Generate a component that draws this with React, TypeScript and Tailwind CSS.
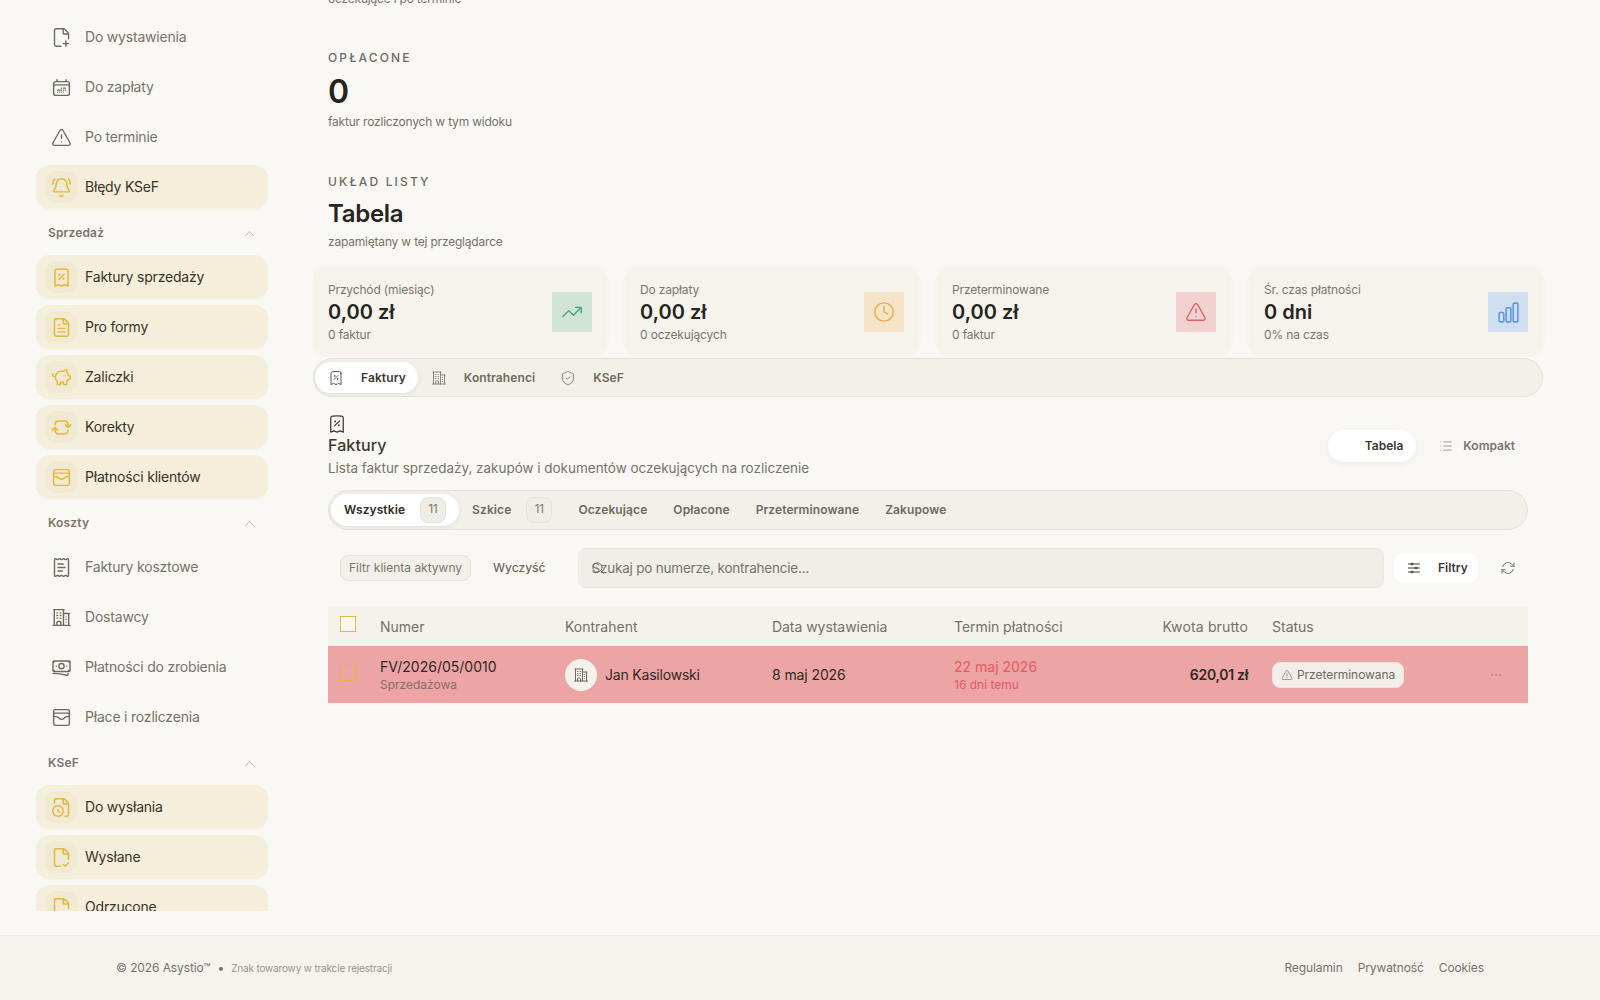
import React from "react";
import { FilePlusCorner, TriangleAlert, BellRing, FileText, PiggyBank, WalletCards, ReceiptText, FileClock, FileCheckCorner, FileXCorner, ChevronUp, TrendingUp, Clock, ShieldCheck, Search, Ellipsis, List } from "lucide-react";
import { HiOutlineCalendarDateRange, HiOutlineReceiptPercent, HiOutlineBuildingOffice2, HiOutlineBanknotes, HiOutlineChartBar, HiOutlineAdjustmentsHorizontal, HiOutlineArrowPath, HiOutlineArrowPathRoundedSquare } from "react-icons/hi2";

type Ic = React.ComponentType<{ size?: number; className?: string; strokeWidth?: number }>;

function Plain({ icon: I, label }: { icon: Ic; label: string }) {
  return (
    <div className="flex h-11 items-center gap-2 pl-[9px] text-[14px] tracking-[-0.2px] text-[#78736a]">
      <span className="flex size-8 items-center justify-center text-[#6f6a60]"><I size={21} strokeWidth={1.6} /></span>
      <span className="pb-[2px]">{label}</span>
    </div>
  );
}
function Active({ icon: I, label }: { icon: Ic; label: string }) {
  return (
    <div className="flex h-11 shrink-0 items-center gap-2 rounded-[14px] bg-[#f4eeda] pl-[9px] text-[14px] tracking-[-0.2px] text-[#3a3327] shadow-[0_1px_2px_rgba(180,160,100,0.06)]">
      <span className="flex size-8 items-center justify-center rounded-[11px] bg-[#f0ead2] text-[#e2b83a]"><I size={21} strokeWidth={1.7} /></span>
      <span className="pb-[2px]">{label}</span>
    </div>
  );
}
function SectionHead({ label }: { label: string }) {
  return (
    <div className="mt-[14px] mb-3 flex h-5 items-center justify-between pl-3 pr-[11px] text-[12px] font-semibold tracking-[0.15px] text-[#7b756b]">
      <span>{label}</span>
      <ChevronUp size={15} strokeWidth={1.25} className="text-[#a9a49a]" />
    </div>
  );
}

function Sidebar() {
  return (
    <aside className="h-[911px] w-[313px] shrink-0 overflow-hidden pl-9 pr-[45px] pt-[15px]">
      <div className="flex flex-col gap-[6px]">
        <Plain icon={FilePlusCorner} label="Do wystawienia" />
        <Plain icon={HiOutlineCalendarDateRange} label="Do zapłaty" />
        <Plain icon={TriangleAlert} label="Po terminie" />
        <Active icon={BellRing} label="Błędy KSeF" />
      </div>
      <SectionHead label="Sprzedaż" />
      <div className="flex flex-col gap-[6px]">
        <Active icon={HiOutlineReceiptPercent} label="Faktury sprzedaży" />
        <Active icon={FileText} label="Pro formy" />
        <Active icon={PiggyBank} label="Zaliczki" />
        <Active icon={HiOutlineArrowPathRoundedSquare} label="Korekty" />
        <Active icon={WalletCards} label="Płatności klientów" />
      </div>
      <SectionHead label="Koszty" />
      <div className="flex flex-col gap-[6px]">
        <Plain icon={ReceiptText} label="Faktury kosztowe" />
        <Plain icon={HiOutlineBuildingOffice2} label="Dostawcy" />
        <Plain icon={HiOutlineBanknotes} label="Płatności do zrobienia" />
        <Plain icon={WalletCards} label="Płace i rozliczenia" />
      </div>
      <SectionHead label="KSeF" />
      <div className="flex flex-col gap-[6px]">
        <Active icon={FileClock} label="Do wysłania" />
        <Active icon={FileCheckCorner} label="Wysłane" />
        <Active icon={FileXCorner} label="Odrzucone" />
      </div>
    </aside>
  );
}

function Stat({ label, value, valueCls, note, noteCls, cls }: { label: string; value: string; valueCls: string; note: string; noteCls?: string; cls?: string }) {
  return (
    <div className={cls}>
      <div className="h-[18px] text-[12px] font-medium uppercase leading-[18px] tracking-[0.18em] text-[#6f6a60]">{label}</div>
      <div className={"mt-[5px] font-semibold text-[#26241f] " + valueCls}>{value}</div>
      <div className={"text-[12px] leading-5 tracking-[-0.2px] text-[#78736a] " + (noteCls ?? "")}>{note}</div>
    </div>
  );
}

function Kpi({ label, value, note, icon: I, box, color, size = 22 }: { label: string; value: string; note: string; icon: Ic; box: string; color: string; size?: number }) {
  return (
    <div className="flex h-[88px] items-center justify-between rounded-[14px] bg-[#f6f3ed] px-[15px] shadow-[0_0_4px_rgba(244,240,232,0.8)]">
      <div className="pt-[2px]">
        <div className="text-[12px] leading-[18px] tracking-[-0.15px] text-[#7b766c]">{label}</div>
        <div className="text-[20px] font-semibold leading-[26px] text-[#26241f]">{value}</div>
        <div className="mt-[1px] text-[12px] leading-[18px] tracking-[-0.15px] text-[#7b766c]">{note}</div>
      </div>
      <div className={"mt-[2px] flex size-10 items-center justify-center " + box + " " + color}><I size={size} strokeWidth={1.5} /></div>
    </div>
  );
}

function Tab({ icon: I, label, active }: { icon: Ic; label: string; active?: boolean }) {
  return (
    <div className={"flex h-[31px] items-center gap-[17px] rounded-full pl-[13px] pr-3 text-[12px] font-semibold tracking-[0.1px] " + (active ? "bg-white text-[#3b3832] shadow-[0_1px_4px_rgba(80,70,50,0.1)]" : "text-[#6f6a60]")}>
      <I size={16} strokeWidth={1.25} className={active ? "text-[#3b3832]" : "text-[#78736a]"} />
      <span>{label}</span>
    </div>
  );
}

function Pill({ label, count, active }: { label: string; count?: string; active?: boolean }) {
  return (
    <div className={"flex h-8 items-center gap-[15px] rounded-full px-[13px] text-[12px] font-semibold tracking-[0.1px] " + (active ? "bg-white text-[#2e2b26] shadow-[0_1px_4px_rgba(80,70,50,0.1)]" : "text-[#6f6a60]")}>
      <span>{label}</span>
      {count && <span className="flex h-[26px] w-[26px] items-center justify-center rounded-lg border border-[#e6e2da] bg-[#f0ede6] text-[11.5px] font-normal tracking-normal text-[#7b766c]">{count}</span>}
    </div>
  );
}

function Check({ faded }: { faded?: boolean }) {
  return <span className={"mb-1 block size-4 border border-[#e3b83b] " + (faded ? "bg-transparent" : "bg-[#f9f7f1]")} />;
}

const cols = "grid grid-cols-[40px_185px_207px_182px_146px_148px_1fr] items-center";

function Table() {
  return (
    <div className="mt-[19px] text-[14px]">
      <div className={cols + " h-[39px] bg-[#f5f2ec] pb-[1px] pl-3 text-[#74706a]"}>
        <Check />
        <span>Numer</span>
        <span>Kontrahent</span>
        <span className="tracking-[-0.05px]">Data wystawienia</span>
        <span className="tracking-[-0.05px]">Termin płatności</span>
        <span className="text-right tracking-[0.15px]">Kwota brutto</span>
        <span className="pl-6">Status</span>
      </div>
      <div className={cols + " h-[57px] bg-[#eda4a4] pl-3 text-[#2f2a25]"}>
        <Check faded />
        <div>
          <div className="leading-[19px]">FV/2026/05/0010</div>
          <div className="text-[12px] leading-[17px] text-[#8a6c68]">Sprzedażowa</div>
        </div>
        <div className="flex items-center gap-2">
          <span className="flex size-8 items-center justify-center rounded-full bg-[#f5f2ec] text-[#6f6a60]"><HiOutlineBuildingOffice2 size={16} /></span>
          <span className="tracking-[-0.2px]">Jan Kasilowski</span>
        </div>
        <span className="tracking-[-0.1px]">8 maj 2026</span>
        <div className="text-[#e45b66]">
          <div className="leading-[19px]">22 maj 2026</div>
          <div className="text-[12px] leading-[17px]">16 dni temu</div>
        </div>
        <span className="text-right font-semibold tracking-[-0.3px]">620,01 zł</span>
        <div className="flex items-center justify-between pl-6 pr-[25px]">
          <span className="flex h-[26px] items-center gap-1 rounded-lg border border-[#eae5dc] bg-[#f3efe8] px-2 text-[12px] tracking-[-0.05px] text-[#6f6a60]"><TriangleAlert size={12} strokeWidth={1.25} />Przeterminowana</span>
          <Ellipsis size={14} strokeWidth={1.25} className="text-[#a98f8c]" />
        </div>
      </div>
    </div>
  );
}

function Main() {
  return (
    <main className="h-[911px] min-w-0 flex-1 overflow-hidden pr-[57px]">
      <div className="-mt-[11px]">
        <div className="pl-[15px]">
          <div className="text-[12px] leading-5 tracking-[-0.2px] text-[#78736a]">oczekujące i po terminie</div>
          <Stat cls="mt-10" label="Opłacone" value="0" valueCls="text-[32px] leading-10" note="faktur rozliczonych w tym widoku" />
          <Stat cls="mt-[41px]" label="Układ listy" value="Tabela" valueCls="pt-[1px] text-[24px] leading-[34px] tracking-[-0.3px]" note="zapamiętany w tej przeglądarce" noteCls="mt-[1px]" />
        </div>
        <div className="mt-[15px] grid grid-cols-4 gap-[18px]">
          <Kpi label="Przychód (miesiąc)" value="0,00 zł" note="0 faktur" icon={TrendingUp} box="bg-[#d0e4d8]" color="text-[#45a679]" />
          <Kpi label="Do zapłaty" value="0,00 zł" note="0 oczekujących" icon={Clock} box="bg-[#f5e4ca]" color="text-[#ecaa45]" />
          <Kpi label="Przeterminowane" value="0,00 zł" note="0 faktur" icon={TriangleAlert} box="bg-[#f2d2d0]" color="text-[#e2605f]" />
          <Kpi label="Śr. czas płatności" value="0 dni" note="0% na czas" icon={HiOutlineChartBar} size={25} box="bg-[#d0dff0]" color="text-[#5d95ec]" />
        </div>
        <div className="mt-[3px] flex h-[39px] items-center rounded-full border border-[#e6e2da] bg-[#f3f0ea] pl-[1px]">
          <Tab icon={HiOutlineReceiptPercent} label="Faktury" active />
          <Tab icon={HiOutlineBuildingOffice2} label="Kontrahenci" />
          <Tab icon={ShieldCheck} label="KSeF" />
        </div>
        <section className="px-[15px] pt-[17px]">
          <div className="flex items-center justify-between">
            <div>
              <HiOutlineReceiptPercent size={20} className="-ml-[1px] text-[#3b3832]" />
              <div className="text-[16px] font-medium leading-[22px] tracking-[0.1px] text-[#3b3832]">Faktury</div>
              <div className="mt-[2px] text-[13.5px] leading-5 tracking-[-0.02px] text-[#78736a]">Lista faktur sprzedaży, zakupów i dokumentów oczekujących na rozliczenie</div>
            </div>
            <div className="flex items-center pr-[13px]">
              <div className="flex h-8 w-[88px] items-center justify-end rounded-full bg-white pr-[13px] text-[12px] font-semibold text-[#3b3832] shadow-[0_2px_6px_rgba(80,70,50,0.08)]">Tabela</div>
              <div className="ml-[23px] flex items-center gap-[10px] text-[12px] font-semibold text-[#7b766c]"><List size={14} strokeWidth={1.25} />Kompakt</div>
            </div>
          </div>
          <div className="mt-3 flex h-10 items-center rounded-full border border-[#e6e2da] bg-[#f3f0ea] pl-[2px]">
            <Pill label="Wszystkie" count="11" active />
            <Pill label="Szkice" count="11" />
            <Pill label="Oczekujące" />
            <Pill label="Opłacone" />
            <Pill label="Przeterminowane" />
            <Pill label="Zakupowe" />
          </div>
          <div className="mt-[18px] flex h-10 items-center pl-3">
            <span className="flex h-[26px] w-[131px] shrink-0 items-center justify-center rounded-lg border border-[#e6e2da] bg-[#f3f0ea] text-[12px] text-[#7b766c]">Filtr klienta aktywny</span>
            <span className="ml-[22px] text-[12px] font-medium text-[#6f6a60]">Wyczyść</span>
            <div className="relative ml-[33px] flex h-10 flex-1 items-center rounded-lg border border-[#ebe8e0] bg-[#f1eee8] pl-3 text-[13.5px] tracking-[-0.2px] text-[#78736a]">
              <span>Szukaj po numerze, kontrahencie...</span>
              <Search size={14} strokeWidth={1.5} className="absolute left-3 top-[12px] text-[#6f6a60]" />
            </div>
            <div className="ml-[10px] flex h-[30px] w-[84px] shrink-0 items-center gap-4 rounded-[10px] bg-white pl-3 text-[12px] font-semibold text-[#3b3832]"><HiOutlineAdjustmentsHorizontal size={16} />Filtry</div>
            <HiOutlineArrowPath size={16} className="ml-[22px] mr-3 shrink-0 text-[#7b766c]" />
          </div>
          <Table />
        </section>
      </div>
    </main>
  );
}

export default function App() {
  return (
    <div className="flex h-screen flex-col overflow-hidden bg-[#f9f8f4] font-['Inter','Liberation_Sans',sans-serif]">
      <div className="flex h-[935px] shrink-0 items-start">
        <Sidebar />
        <Main />
      </div>
      <footer className="flex flex-1 items-center justify-between border-t border-[#efece5] bg-[#f5f3ee] px-[116px] text-[12px] tracking-[-0.1px] text-[#78736a]">
        <div className="flex items-center gap-[7px]">
          <span>© 2026 Asystio™</span>
          <span>•</span>
          <span className="text-[10px] tracking-[-0.17px] text-[#9a958b]">Znak towarowy w trakcie rejestracji</span>
        </div>
        <div className="flex items-center gap-[15px]">
          <span>Regulamin</span>
          <span>Prywatność</span>
          <span>Cookies</span>
        </div>
      </footer>
    </div>
  );
}
